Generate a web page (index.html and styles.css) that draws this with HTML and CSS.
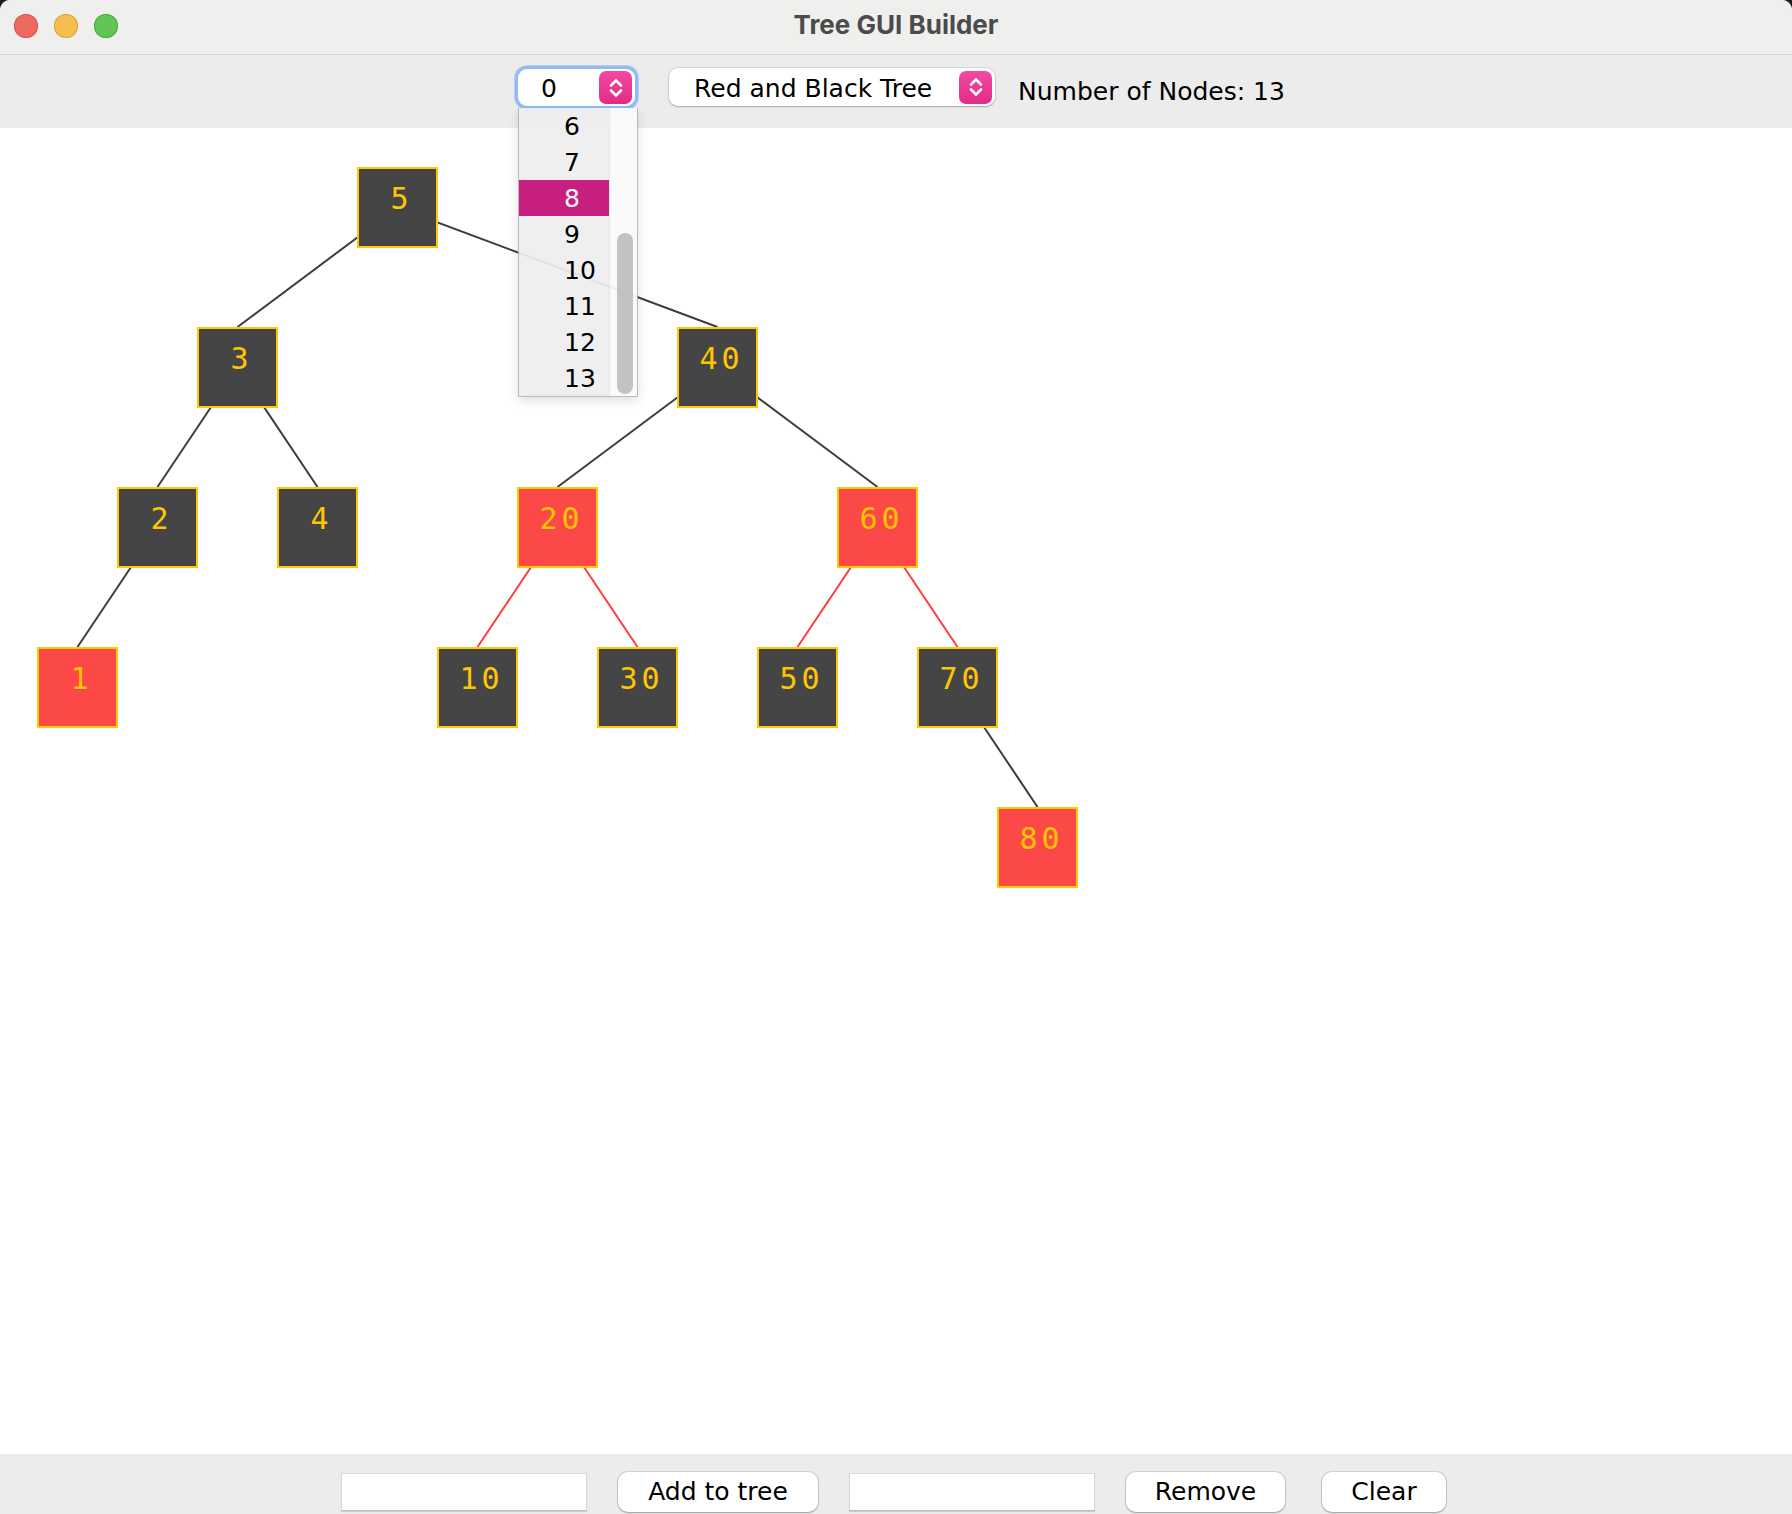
FILE: index.html
```html
<!DOCTYPE html>
<html>
<head>
<meta charset="utf-8">
<title>Tree GUI Builder</title>
<link rel="stylesheet" href="styles.css">
</head>
<body>
<div class="window">
  <header class="titlebar">
    <div class="lights">
      <span class="light red"></span>
      <span class="light yellow"></span>
      <span class="light green"></span>
    </div>
    <div class="title">Tree GUI Builder</div>
    <div></div>
  </header>

  <div class="toolbar">
    <div class="combo-wrap">
      <div class="combo combo-num focused">
        <span class="combo-text">0</span>
        <span class="combo-btn">
          <svg viewBox="0 0 32 32" width="32" height="32"><path d="M11 13.5 L16 8.5 L21 13.5" /><path d="M11 18.5 L16 23.5 L21 18.5" /></svg>
        </span>
      </div>
      <div class="dropdown">
        <ul class="dd-list">
          <li>6</li>
          <li>7</li>
          <li class="selected">8</li>
          <li>9</li>
          <li>10</li>
          <li>11</li>
          <li>12</li>
          <li>13</li>
        </ul>
        <div class="dd-scroll"><span class="dd-thumb"></span></div>
      </div>
    </div>
    <div class="combo combo-type">
      <span class="combo-text">Red and Black Tree</span>
      <span class="combo-btn">
        <svg viewBox="0 0 32 32" width="32" height="32"><path d="M11 13.5 L16 8.5 L21 13.5" /><path d="M11 18.5 L16 23.5 L21 18.5" /></svg>
      </span>
    </div>
    <div class="count">Number of Nodes: 13</div>
  </div>

  <main class="canvas">
    <svg class="edges" width="1792" height="1326" viewBox="0 0 1792 1326">
      <g class="edge-dark">
        <line x1="397.5" y1="79.5" x2="237.5" y2="199"/>
        <line x1="397.5" y1="79.5" x2="717.5" y2="199"/>
        <line x1="237.5" y1="239.5" x2="157.5" y2="359"/>
        <line x1="237.5" y1="239.5" x2="317.5" y2="359"/>
        <line x1="157.5" y1="399.5" x2="77.5" y2="519"/>
        <line x1="717.5" y1="239.5" x2="557.5" y2="359"/>
        <line x1="717.5" y1="239.5" x2="877.5" y2="359"/>
        <line x1="957.5" y1="559.5" x2="1037.5" y2="679"/>
      </g>
      <g class="edge-red">
        <line x1="557.5" y1="399.5" x2="477.5" y2="519"/>
        <line x1="557.5" y1="399.5" x2="637.5" y2="519"/>
        <line x1="877.5" y1="399.5" x2="797.5" y2="519"/>
        <line x1="877.5" y1="399.5" x2="957.5" y2="519"/>
      </g>
    </svg>
    <div class="node red" style="left:37px;top:519px">1</div>
    <div class="node black" style="left:117px;top:359px">2</div>
    <div class="node black" style="left:197px;top:199px">3</div>
    <div class="node black" style="left:277px;top:359px">4</div>
    <div class="node black" style="left:357px;top:39px">5</div>
    <div class="node black" style="left:437px;top:519px">10</div>
    <div class="node red" style="left:517px;top:359px">20</div>
    <div class="node black" style="left:597px;top:519px">30</div>
    <div class="node black" style="left:677px;top:199px">40</div>
    <div class="node black" style="left:757px;top:519px">50</div>
    <div class="node red" style="left:837px;top:359px">60</div>
    <div class="node black" style="left:917px;top:519px">70</div>
    <div class="node red" style="left:997px;top:679px">80</div>
  </main>

  <footer class="bottombar">
    <div class="field"></div>
    <button class="btn btn-add">Add to tree</button>
    <div class="field field-2"></div>
    <button class="btn btn-remove">Remove</button>
    <button class="btn btn-clear">Clear</button>
  </footer>
</div>
</body>
</html>
```

FILE: styles.css
```css
* { box-sizing: border-box; }

html, body {
  margin: 0;
  padding: 0;
  background: #1c1c1c;
}

body {
  font-family: "DejaVu Sans", "Liberation Sans", sans-serif;
  color: #000;
}

.window {
  width: 1792px;
  height: 1514px;
  display: flex;
  flex-direction: column;
  border-radius: 10px 10px 0 0;
  overflow: hidden;
  background: #ffffff;
}

/* ---------- title bar ---------- */
.titlebar {
  height: 55px;
  flex: 0 0 55px;
  background: #efefee;
  border-bottom: 1px solid #d2d2d2;
  display: grid;
  grid-template-columns: 1fr auto 1fr;
  align-items: center;
}

.lights {
  display: flex;
  gap: 16px;
  padding-left: 14px;
  margin-top: -2px;
}

.light {
  width: 24px;
  height: 24px;
  border-radius: 50%;
  display: block;
}
.light.red { background: #ee6a5f; box-shadow: inset 0 0 0 1px #d8574c; }
.light.yellow { background: #f5bf4f; box-shadow: inset 0 0 0 1px #d9a23a; }
.light.green { background: #61c554; box-shadow: inset 0 0 0 1px #4ea840; }

.title {
  font-family: "Inter", "Roboto", sans-serif;
  font-weight: 700;
  font-size: 26px;
  color: #4b4b4b;
  margin-top: -5px;
}

/* ---------- toolbar ---------- */
.toolbar {
  height: 73px;
  flex: 0 0 73px;
  background: #ececec;
  display: flex;
  justify-content: center;
  align-items: flex-start;
  padding-left: 11px;
  position: relative;
  z-index: 2;
  font-size: 25px;
}

.combo-wrap {
  position: relative;
  margin-top: 14px;
}

.combo {
  height: 38px;
  background: #ffffff;
  border-radius: 9px;
  display: flex;
  align-items: center;
  box-shadow: 0 0 0 1px rgba(0, 0, 0, 0.08), 0 1px 2px rgba(0, 0, 0, 0.22);
  position: relative;
}

.combo-num {
  width: 117px;
  height: 37px;
}

.combo-num.focused {
  box-shadow: 0 0 0 3px #90bcf5, 0 0 0 4px rgba(100, 150, 230, 0.35);
}

.combo-num .combo-text {
  padding-left: 23px;
  padding-top: 3px;
  flex: 1;
  line-height: 30px;
}

.combo-type {
  width: 326px;
  margin-top: 13px;
  margin-left: 34px;
}

.combo-type .combo-text {
  padding-left: 25px;
  padding-top: 3px;
  flex: 1;
  line-height: 30px;
}

.combo-btn {
  width: 33px;
  height: 33px;
  border-radius: 7px;
  background: linear-gradient(#f24aa2, #e22b86);
  margin-right: 3px;
  display: flex;
  align-items: center;
  justify-content: center;
}

.combo-btn svg {
  display: block;
}

.combo-btn path {
  fill: none;
  stroke: #ffffff;
  stroke-width: 2.6;
  stroke-linecap: round;
  stroke-linejoin: round;
}

.count {
  margin-left: 23px;
  margin-top: 22px;
  line-height: 30px;
  white-space: nowrap;
}

/* ---------- dropdown ---------- */
.dropdown {
  position: absolute;
  left: 0;
  top: 39px;
  width: 120px;
  height: 289px;
  display: flex;
  border: 1px solid rgba(170, 170, 170, 0.8);
  border-top: none;
  box-shadow: 0 4px 10px rgba(0, 0, 0, 0.12);
}

.dd-list {
  list-style: none;
  margin: 0;
  padding: 0;
  width: 90px;
  background: rgba(238, 238, 238, 0.93);
}

.dd-list li {
  height: 36px;
  line-height: 36px;
  padding-left: 45px;
  padding-top: 1px;
  font-size: 25px;
  color: #000;
}

.dd-list li.selected {
  background: #c71f80;
  color: #ffffff;
}

.dd-scroll {
  flex: 1;
  background: rgba(250, 250, 250, 0.93);
  position: relative;
  border-left: 1px solid rgba(225, 225, 225, 0.8);
}

.dd-thumb {
  position: absolute;
  left: 7px;
  top: 125px;
  width: 16px;
  height: 161px;
  border-radius: 8px;
  background: #c2c2c2;
}

/* ---------- canvas ---------- */
.canvas {
  flex: 1 1 auto;
  position: relative;
  background: #ffffff;
  z-index: 1;
}

.edges {
  position: absolute;
  left: 0;
  top: 0;
}

.edge-dark line {
  stroke: #3d3d3d;
  stroke-width: 2;
}

.edge-red line {
  stroke: #fe3c3c;
  stroke-width: 2;
}

.node {
  position: absolute;
  width: 81px;
  height: 81px;
  border: 2px solid #ffc800;
  font-family: "DejaVu Sans Mono", "Liberation Mono", monospace;
  font-size: 30px;
  line-height: 30px;
  letter-spacing: 4px;
  text-align: center;
  padding-top: 14.5px;
  padding-left: 8px;
  color: #ffc600;
}

.node.black { background: #454545; }
.node.red { background: #fd4848; }

/* ---------- bottom bar ---------- */
.bottombar {
  height: 60px;
  flex: 0 0 60px;
  background: #ececec;
  display: flex;
  justify-content: center;
  align-items: flex-start;
  padding-right: 5px;
  z-index: 1;
}

.field {
  width: 246px;
  height: 38px;
  margin-top: 19px;
  background: #ffffff;
  border: 1px solid #d8d8d8;
  border-bottom: 1px solid #b9b9b9;
  box-shadow: 0 1px 1px rgba(0, 0, 0, 0.12);
}

.field-2 { margin-left: 31px; }

.btn {
  height: 40px;
  margin-top: 18px;
  background: #ffffff;
  border: none;
  border-radius: 10px;
  box-shadow: 0 0 0 1px rgba(0, 0, 0, 0.1), 0 1px 2px rgba(0, 0, 0, 0.25);
  font-family: "DejaVu Sans", "Liberation Sans", sans-serif;
  font-size: 25px;
  color: #000;
  padding: 0;
  line-height: 36px;
}

.btn-add { width: 200px; margin-left: 31px; }
.btn-remove { width: 159px; margin-left: 31px; }
.btn-clear { width: 124px; margin-left: 37px; }
```
